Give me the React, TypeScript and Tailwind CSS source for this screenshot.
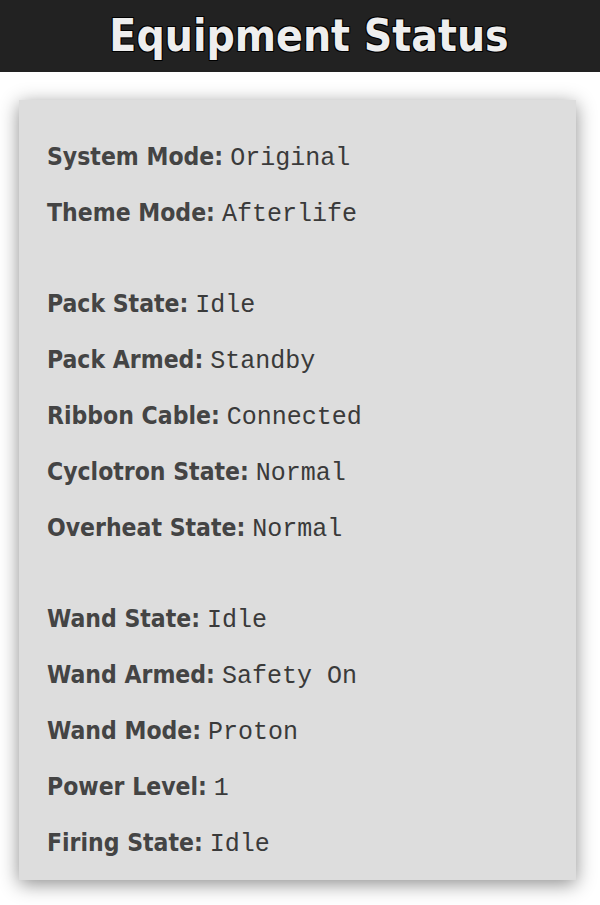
const groups: [string, string][][] = [
  [
    ["System Mode", "Original"],
    ["Theme Mode", "Afterlife"],
  ],
  [
    ["Pack State", "Idle"],
    ["Pack Armed", "Standby"],
    ["Ribbon Cable", "Connected"],
    ["Cyclotron State", "Normal"],
    ["Overheat State", "Normal"],
  ],
  [
    ["Wand State", "Idle"],
    ["Wand Armed", "Safety On"],
    ["Wand Mode", "Proton"],
    ["Power Level", "1"],
    ["Firing State", "Idle"],
  ],
];

const Row = ({ label, value }: { label: string; value: string }) => (
  <div className="h-[56px] leading-[56px] whitespace-nowrap">
    <span className="text-[24.5px] font-bold text-[#444] [font-family:'DejaVu_Sans_Condensed','DejaVu_Sans',sans-serif] [font-stretch:condensed]">
      {label}:
    </span>
    <span className="ml-[7px] text-[25px] text-[#3a3a3a] [font-family:'Courier_New','Nimbus_Mono_PS','FreeMono','Liberation_Mono',monospace]">
      {value}
    </span>
  </div>
);

export default function App() {
  return (
    <div className="min-h-[905px] bg-white">
      <header className="h-[72px] bg-[#222] flex items-center justify-center pl-[18px]">
        <h1 className="text-[44px] font-bold text-[#eee] leading-none [font-family:'DejaVu_Sans_Condensed','DejaVu_Sans',sans-serif] [font-stretch:condensed] [text-shadow:-1px_-1px_0_#000,1px_-1px_0_#000,-1px_1px_0_#000,1px_1px_0_#000]">
          Equipment Status
        </h1>
      </header>
      <div className="pl-[19px] pr-[24px] pt-[28px]">
        <div className="bg-[#ddd] shadow-[0_4px_18px_rgba(0,0,0,0.45)] pl-[28px] pt-[29px] pb-[9px]">
          {groups.map((g, i) => (
            <div key={i} className={i > 0 ? "mt-[35px]" : ""}>
              {g.map(([l, v]) => (
                <Row key={l} label={l} value={v} />
              ))}
            </div>
          ))}
        </div>
      </div>
    </div>
  );
}
